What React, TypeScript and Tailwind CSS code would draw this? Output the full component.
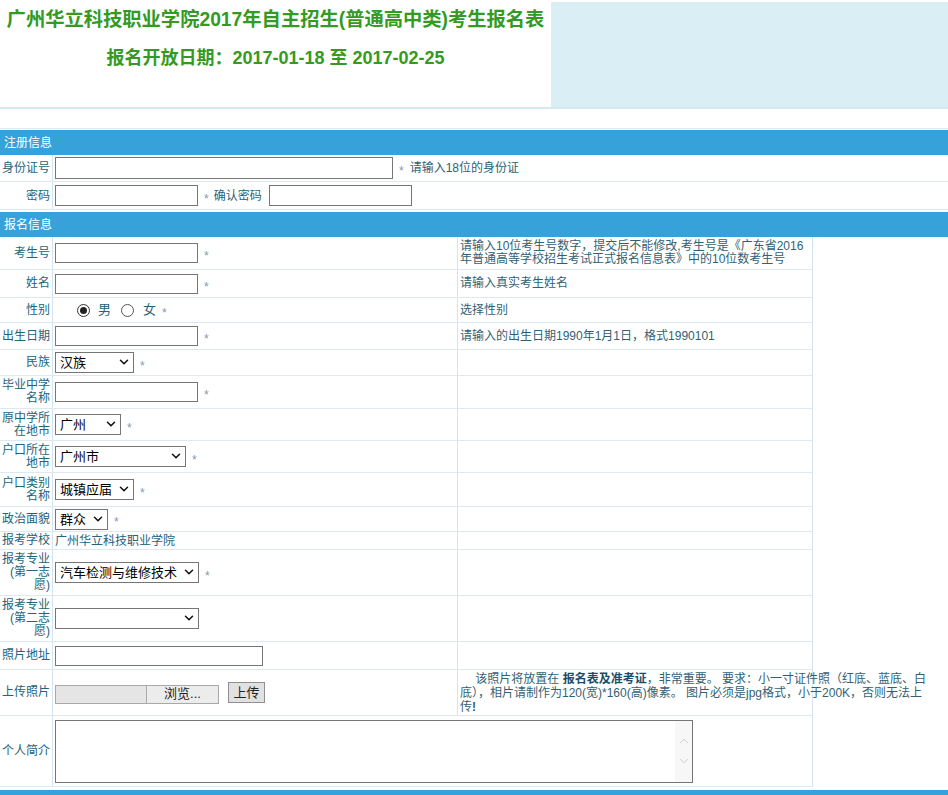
import React from "react";
import { ChevronDown, ChevronUp } from "lucide-react";

const Star = () => (
  <span className="ml-[6px] mt-[6px] text-[12px] leading-none text-[#7d9bb0]">*</span>
);

const Bar = ({ children }: { children?: React.ReactNode }) => (
  <div className="flex h-[25px] items-center bg-[#37a2d9] pl-[4px] text-[12px] text-white">{children}</div>
);

const Sel = ({ w, value }: { w: string; value?: string }) => (
  <div className={`relative flex ${w}`}>
    <select
      defaultValue={value ?? ""}
      className="h-[21px] w-full appearance-none rounded-none border border-[#767676] bg-white pl-[4px] text-[13px] leading-[19px] text-black outline-none"
    >
      <option value={value ?? ""}>{value ?? ""}</option>
    </select>
    <ChevronDown size={14} strokeWidth={2.6} className="pointer-events-none absolute right-[3px] top-[3px] text-[#111]" />
  </div>
);

const Field = ({ w }: { w: string }) => (
  <input type="text" className={`h-[20px] border border-[#767676] bg-white outline-none ${w}`} />
);

function Row({
  h,
  label,
  children,
  note,
}: {
  h: string;
  label: React.ReactNode;
  children?: React.ReactNode;
  note?: React.ReactNode;
}) {
  return (
    <div className={`flex w-[813px] border-b border-[#dde9f0] ${h}`}>
      <div className="flex w-[53px] shrink-0 items-center justify-end border-r border-[#d3e4ee] pr-[2px] text-right leading-[13px] text-[#23637b]">
        <span>{label}</span>
      </div>
      <div className="flex w-[405px] shrink-0 items-center border-r border-[#d3e4ee] pl-[2px]">{children}</div>
      <div className="flex w-[355px] shrink-0 items-center border-r border-[#d3e4ee] pl-[2px] leading-[13px] text-[#335f74]">
        <div className="whitespace-nowrap">{note}</div>
      </div>
    </div>
  );
}

export default function App() {
  return (
    <div className="min-h-[795px] w-[948px] overflow-hidden bg-white font-['Liberation_Sans','Noto_Sans_CJK_SC',sans-serif] text-[12px]">
      {/* header */}
      <div className="flex h-[107px]">
        <div className="flex w-[551px] flex-col items-center pt-[8px] font-bold text-[#349a22]">
          <div className="whitespace-nowrap text-[19.3px] leading-[24px]">广州华立科技职业学院2017年自主招生(普通高中类)考生报名表</div>
          <div className="mt-[15px] whitespace-nowrap text-[18px] leading-[22px]">报名开放日期：2017-01-18 至 2017-02-25</div>
        </div>
        <div className="mt-[2px] flex-1 bg-[#daeef5]" />
      </div>
      <div className="h-[2px] bg-[#d4eaf3]" />
      <div className="h-[19px]" />
      <div className="h-[1px] bg-[#dcedf4]" />
      <div className="h-[1px]" />

      <Bar>注册信息</Bar>
      <div className="flex h-[27px] border-b border-[#dde9f0]">
        <div className="flex w-[53px] shrink-0 items-center justify-end border-r border-[#d3e4ee] pr-[2px] text-[#23637b]">身份证号</div>
        <div className="flex items-center pl-[2px]">
          <input type="text" className="h-[22px] w-[338px] border border-[#767676] bg-white outline-none" />
          <Star />
          <span className="ml-[6px] text-[#2c5f77]">请输入18位的身份证</span>
        </div>
      </div>
      <div className="flex h-[28px] border-b border-[#dde9f0]">
        <div className="flex w-[53px] shrink-0 items-center justify-end border-r border-[#d3e4ee] pr-[2px] text-[#23637b]">密码</div>
        <div className="flex items-center pl-[2px]">
          <input type="password" className="h-[21px] w-[143px] border border-[#767676] bg-white outline-none" />
          <Star />
          <span className="ml-[5px] text-[#2c5f77]">确认密码</span>
          <input type="password" className="ml-[7px] h-[21px] w-[143px] border border-[#767676] bg-white outline-none" />
        </div>
      </div>
      <div className="h-[2px]" />

      <Bar>报名信息</Bar>
      <Row
        h="h-[33px]"
        label="考生号"
        note={
          <>
            请输入10位考生号数字，提交后不能修改,考生号是《广东省2016
            <br />
            年普通高等学校招生考试正式报名信息表》中的10位数考生号
          </>
        }
      >
        <Field w="w-[143px]" />
        <Star />
      </Row>
      <Row h="h-[28px]" label="姓名" note="请输入真实考生姓名">
        <Field w="w-[143px]" />
        <Star />
      </Row>
      <Row h="h-[25px]" label="性别" note="选择性别">
        <div className="ml-[22px] flex items-center">
          <span className="flex h-[13px] w-[13px] items-center justify-center rounded-full border border-[#333]">
            <span className="h-[7px] w-[7px] rounded-full bg-[#222]" />
          </span>
          <span className="ml-[8px] text-[13px] text-[#23637b]">男</span>
          <span className="ml-[10px] h-[13px] w-[13px] rounded-full border border-[#555]" />
          <span className="ml-[9px] text-[13px] text-[#23637b]">女</span>
          <Star />
        </div>
      </Row>
      <Row h="h-[27px]" label="出生日期" note="请输入的出生日期1990年1月1日，格式1990101">
        <Field w="w-[143px]" />
        <Star />
      </Row>
      <Row h="h-[26px]" label="民族">
        <Sel w="w-[79px]" value="汉族" />
        <Star />
      </Row>
      <Row
        h="h-[33px]"
        label={
          <>
            毕业中学
            <br />
            名称
          </>
        }
      >
        <Field w="w-[143px]" />
        <Star />
      </Row>
      <Row
        h="h-[32px]"
        label={
          <>
            原中学所
            <br />
            在地市
          </>
        }
      >
        <Sel w="w-[66px]" value="广州" />
        <Star />
      </Row>
      <Row
        h="h-[32px]"
        label={
          <>
            户口所在
            <br />
            地市
          </>
        }
      >
        <Sel w="w-[131px]" value="广州市" />
        <Star />
      </Row>
      <Row
        h="h-[34px]"
        label={
          <>
            户口类别
            <br />
            名称
          </>
        }
      >
        <Sel w="w-[79px]" value="城镇应届" />
        <Star />
      </Row>
      <Row h="h-[25px]" label="政治面貌">
        <Sel w="w-[53px]" value="群众" />
        <Star />
      </Row>
      <Row h="h-[18px]" label="报考学校">
        <span className="text-[#23637b]">广州华立科技职业学院</span>
      </Row>
      <Row
        h="h-[46px]"
        label={
          <>
            报考专业
            <br />
            (第一志
            <br />
            愿)
          </>
        }
      >
        <Sel w="w-[144px]" value="汽车检测与维修技术" />
        <Star />
      </Row>
      <Row
        h="h-[46px]"
        label={
          <>
            报考专业
            <br />
            (第二志
            <br />
            愿)
          </>
        }
      >
        <Sel w="w-[144px]" />
      </Row>
      <Row h="h-[28px]" label="照片地址">
        <Field w="w-[208px]" />
      </Row>
      <Row
        h="h-[46px]"
        label="上传照片"
        note={
          <div className="leading-[14px]">
            {"\u3000\u00a0"}该照片将放置在 <b className="text-[#1b4f69]">报名表及准考证</b>，非常重要。 要求：小一寸证件照（红底、蓝底、白
            <br />
            底），相片请制作为120(宽)*160(高)像素。 图片必须是jpg格式，小于200K，否则无法上
            <br />
            传<b>!</b>
          </div>
        }
      >
        <div className="mt-[3px] flex h-[19px] items-stretch">
          <div className="w-[91px] border border-r-0 border-[#a9a9a9] bg-[#e5e5e5]" />
          <div className="flex w-[73px] items-center justify-center border border-[#a9a9a9] bg-[#ececec] text-[13px] text-[#222]">
            浏览...
          </div>
        </div>
        <button className="ml-[9px] h-[21px] w-[37px] border border-[#8f8f8f] bg-[#e1e1e1] text-[13px] leading-[19px] text-[#222]">
          上传
        </button>
      </Row>
      {/* 个人简介: input spans both right columns */}
      <div className="flex h-[71px] w-[813px] border-b border-[#dde9f0]">
        <div className="flex w-[53px] shrink-0 items-center justify-end border-r border-[#d3e4ee] pr-[2px] text-[#23637b]">个人简介</div>
        <div className="flex flex-1 items-center border-r border-[#d3e4ee] pl-[2px]">
          <div className="relative flex h-[63px] w-[638px]">
            <textarea className="h-full w-full resize-none border border-[#767676] bg-white outline-none" />
            <div className="pointer-events-none absolute bottom-[1px] right-[1px] top-[1px] flex w-[17px] flex-col items-center justify-center gap-[6px] bg-[#f7f7f7]">
              <ChevronUp size={14} strokeWidth={1.5} className="text-[#c4c4c4]" />
              <ChevronDown size={14} strokeWidth={1.5} className="text-[#c4c4c4]" />
            </div>
          </div>
        </div>
      </div>
      <div className="h-[3px]" />
      <Bar />
    </div>
  );
}
